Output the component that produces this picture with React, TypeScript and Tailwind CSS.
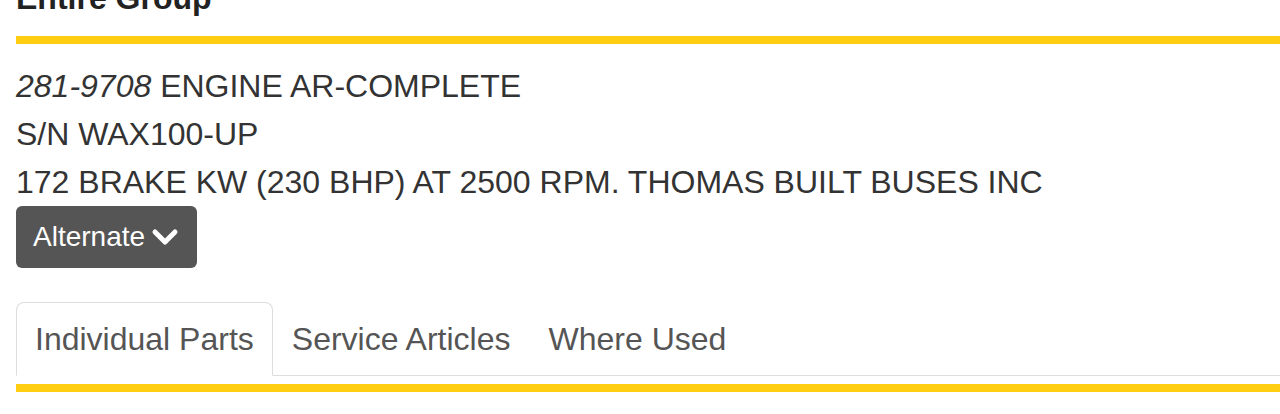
import { useState } from "react";

const tabs = ["Individual Parts", "Service Articles", "Where Used"];

function Chevron() {
  return (
    <svg width="28" height="18" viewBox="0 0 28 18" className="ml-[6px]">
      <polyline
        points="4,4 14,14 24,4"
        fill="none"
        stroke="#fff"
        strokeWidth="5"
        strokeLinecap="round"
        strokeLinejoin="round"
      />
    </svg>
  );
}

export default function App() {
  const [active, setActive] = useState(0);

  return (
    <div className="h-[414px] overflow-hidden bg-white pl-4 font-['Liberation_Sans',Arial,sans-serif] text-[#333]">
      <h2 className="-mt-[20px] text-[32px] font-bold leading-[36px] text-[#222]">
        Entire Group
      </h2>
      <div className="mt-[20px] h-[8px] bg-[#ffcd11]" />

      <div className="mt-[18px] text-[32px] leading-[48px]">
        <div>
          <i>281-9708</i> ENGINE AR-COMPLETE
        </div>
        <div>S/N WAX100-UP</div>
        <div>172 BRAKE KW (230 BHP) AT 2500 RPM. THOMAS BUILT BUSES INC</div>
      </div>

      <button className="flex h-[62px] items-center rounded-[6px] bg-[#555] pl-[17px] pr-[18px] text-[28px] leading-none text-white">
        Alternate
        <Chevron />
      </button>

      <div className="mt-[34px] flex border-b border-[#ddd]">
        {tabs.map((t, i) => (
          <button
            key={t}
            onClick={() => setActive(i)}
            className={
              i === active
                ? "-mb-px rounded-t-[8px] border border-[#ddd] border-b-white bg-white px-[18px] py-[12px] text-[32px] leading-[48px] text-[#555]"
                : "-mb-px border border-transparent px-[18px] py-[12px] text-[32px] leading-[48px] text-[#555]"
            }
          >
            {t}
          </button>
        ))}
      </div>
      <div className="mt-[8px] h-[8px] bg-[#ffcd11]" />
    </div>
  );
}
